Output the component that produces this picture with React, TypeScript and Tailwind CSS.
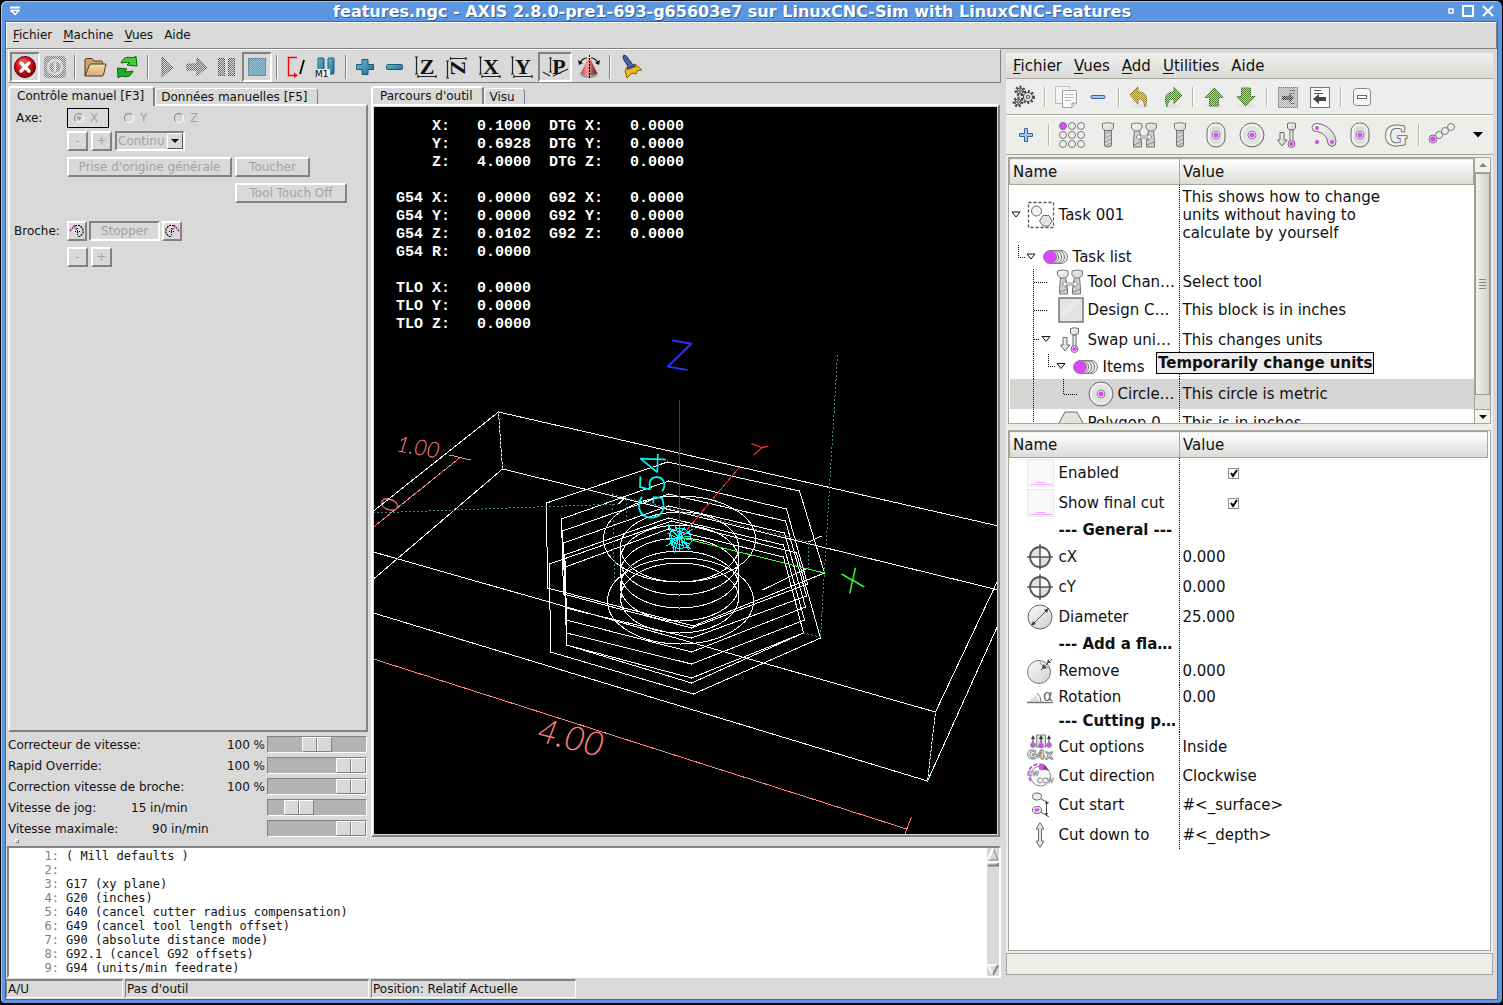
import type { ReactNode } from 'react'
import clsx from 'clsx'

const bevelUp = 'border-2 border-t-white border-l-white border-r-[#828282] border-b-[#828282]'
const bevelDown = 'border-2 border-t-[#828282] border-l-[#828282] border-r-white border-b-white'

interface IconProps {
  w?: number
  h?: number
  children: ReactNode
}

function Icon({ w = 26, h = 26, children }: IconProps) {
  return (
    <svg width={w} height={h} viewBox={`0 0 ${w} ${h}`} className="shrink-0" aria-hidden="true">
      {children}
    </svg>
  )
}

function SharedDefs() {
  return (
    <svg className="absolute size-0" aria-hidden="true">
      <defs>
        <pattern id="stipple" width="2" height="2" patternUnits="userSpaceOnUse">
          <rect width="1" height="1" fill="#d9d9d9" />
          <rect x="1" y="1" width="1" height="1" fill="#d9d9d9" />
        </pattern>
        <pattern id="stippleLight" width="2" height="2" patternUnits="userSpaceOnUse">
          <rect width="1" height="1" fill="#ededeb" />
          <rect x="1" y="1" width="1" height="1" fill="#ededeb" />
        </pattern>
        <linearGradient id="teal" x1="0" y1="0" x2="1" y2="1">
          <stop offset="0" stopColor="#6fb9d3" />
          <stop offset="1" stopColor="#1d6c8e" />
        </linearGradient>
        <linearGradient id="metal" x1="0" y1="0" x2="1" y2="1">
          <stop offset="0" stopColor="#fafafa" />
          <stop offset="1" stopColor="#cfcfcd" />
        </linearGradient>
        <linearGradient id="folder" x1="0" y1="0" x2="0" y2="1">
          <stop offset="0" stopColor="#f7dfb2" />
          <stop offset="1" stopColor="#d9ac6a" />
        </linearGradient>
        <radialGradient id="redBall" cx="0.4" cy="0.3" r="0.7">
          <stop offset="0" stopColor="#f47070" />
          <stop offset="0.5" stopColor="#d01218" />
          <stop offset="1" stopColor="#8c0408" />
        </radialGradient>
        <linearGradient id="cone" x1="0" y1="0" x2="1" y2="0">
          <stop offset="0" stopColor="#c04040" />
          <stop offset="0.4" stopColor="#f5a0a0" />
          <stop offset="1" stopColor="#501010" />
        </linearGradient>
      </defs>
    </svg>
  )
}

/* ---- machine toolbar icons ---- */

const PLAY = 'M8 3 L19 13 L8 23 Z'
const STEP = 'M3 10 H13 V4 L23 13 L13 22 V16 H3 Z'

function Stippled({ children }: { children: ReactNode }) {
  return (
    <Icon>
      {children}
      <rect width="26" height="26" fill="url(#stipple)" />
    </Icon>
  )
}

const EstopIcon = () => (
  <Icon>
    <circle cx="13" cy="13" r="10.5" fill="url(#redBall)" stroke="#5c0306" />
    <path d="M9 9 L17 17 M17 9 L9 17" stroke="#fff" strokeWidth="3.4" strokeLinecap="round" />
  </Icon>
)

const PowerIcon = () => (
  <Stippled>
    <rect x="2" y="2" width="22" height="22" rx="4" fill="#c0664c" />
    <circle cx="13" cy="13" r="7" fill="none" stroke="#e6dcd8" strokeWidth="2.4" />
    <path d="M13 8 V18" stroke="#e6dcd8" strokeWidth="2.4" />
  </Stippled>
)

const FolderIcon = () => (
  <Icon>
    <path d="M3 22 V6 Q3 4.500 4.500 4.500 H10 L12 7 H19 Q20.500 7 20.500 8.500 V11" fill="#c9a36a" stroke="#4d3a1c" />
    <path d="M3 22 L7.500 11 Q8 10 9 10 H24 L21.500 21 Q21 22 20 22 Z" fill="url(#folder)" stroke="#4d3a1c" />
  </Icon>
)

const ReloadIcon = () => (
  <Icon>
    <path d="M7 9 C9 4 13 2 18 4 L22 2.500 L23 12 L13 11 L15.500 8.500 C13 8 10 8.500 7 9 Z" fill="#3cd03c" stroke="#0c5c12" />
    <path d="M19 17 C17 22 13 24 8 22 L4 23.500 L3.500 14 L13 15 L10.500 17.500 C13 18 16 17.500 19 17 Z" fill="#1fae28" stroke="#0c5c12" />
  </Icon>
)

const SkipIcon = () => (
  <Icon>
    <path d="M14 3.500 H5.500 V21.500 H12" fill="none" stroke="#f00" strokeWidth="1.400" />
    <path d="M11 18.500 L15 21.500 L11 24 Z" fill="#f00" />
    <path d="M21 6 L17 20" stroke="#000" strokeWidth="1.800" />
  </Icon>
)

const OptStopIcon = () => (
  <Icon>
    <rect x="5" y="4" width="6" height="16" rx="1" fill="url(#teal)" stroke="#1d5c78" />
    <rect x="15" y="4" width="6" height="16" rx="1" fill="url(#teal)" stroke="#1d5c78" />
    <rect x="3" y="15" width="14" height="8" fill="#eee" />
    <text x="2" y="23" fontFamily="DejaVu Sans" fontSize="9" fill="#000">M1</text>
  </Icon>
)

interface ViewIconProps {
  letter: string
  sideways?: boolean
  perspective?: boolean
}

function ViewIcon({ letter, sideways, perspective }: ViewIconProps) {
  return (
    <Icon w={28}>
      {perspective ? (
        <path d="M9.500 4 V18 M8 4 H11 M8 18 H11 M2 18 L9 22 M12 22 L27 15" fill="none" stroke="#222" strokeWidth="1.200" />
      ) : sideways ? (
        <path d="M6.500 4.500 H22 M6.500 3 V6 M22 3 V6 M3.500 7 V24 M2 7 H5 M2 24 H5" fill="none" stroke="#222" strokeWidth="1.200" />
      ) : (
        <path d="M4.500 3 V20 M3 3 H6 M3 20 H6 M6 22.500 H24 M6 21 V24 M24 21 V24" fill="none" stroke="#222" strokeWidth="1.200" />
      )}
      <text
        x={perspective ? 18 : 15}
        y="20"
        textAnchor="middle"
        transform={sideways ? 'rotate(90 14 13)' : undefined}
        fontFamily="Liberation Serif"
        fontWeight="bold"
        fontSize="22"
        fill="#111"
      >
        {letter}
      </text>
    </Icon>
  )
}

const ConeIcon = () => (
  <Icon>
    <ellipse cx="13" cy="20" rx="9" ry="4" fill="#999" />
    <path d="M12 4 L5 19 Q13 25 21 19 L14 4 Z" fill="url(#cone)" />
    <path d="M13.500 1 V25" stroke="#000" strokeDasharray="2 1" />
    <path d="M4 9 C6 5 8 4 11 4 M22 9 C20 5 18 4 15 4" fill="none" stroke="#111" strokeWidth="1.200" />
    <path d="M2 6 L3 11 L7 9 Z M24 6 L23 11 L19 9 Z" fill="#111" />
  </Icon>
)

const BroomIcon = () => (
  <Icon>
    <path d="M4 2 Q7 0 8 3 L14 11 L10 14 L5 6 Z" fill="#4a62b0" stroke="#1d2a5c" />
    <path d="M8 13 L16 10 L23 16 L18 17 L17 20 L13 19 L8 24 L6 17 Z" fill="#f0b818" stroke="#8a5a08" />
    <path d="M8 13 L16 10 L17 13 L8 16 Z" fill="#3b4f96" />
  </Icon>
)

interface ToolButtonProps {
  label: string
  pressed?: boolean
  width?: string
  children: ReactNode
}

function ToolButton({ label, pressed, width = 'w-[30px]', children }: ToolButtonProps) {
  return (
    <button
      type="button"
      aria-label={label}
      className={clsx('flex h-[30px] items-center justify-center border-2', width, pressed ? bevelDown : 'border-transparent')}
    >
      {children}
    </button>
  )
}

const ToolSep = () => (
  <div className="flex w-[9px] shrink-0 justify-center">
    <div className="h-6 w-[2px] border-r border-l border-r-white border-l-[#828282]" />
  </div>
)

function MachineToolbar() {
  return (
    <div className="ml-[2px] flex h-[34px] items-center border-t border-r border-b border-l border-t-white border-l-white border-r-[#828282] border-b-[#828282] pt-px pl-px">
      <ToolButton label="Arrêt d'urgence" pressed><EstopIcon /></ToolButton>
      <ToolButton label="Marche machine"><PowerIcon /></ToolButton>
      <ToolSep />
      <ToolButton label="Ouvrir" width="w-8"><FolderIcon /></ToolButton>
      <ToolButton label="Recharger" width="w-8"><ReloadIcon /></ToolButton>
      <ToolSep />
      <ToolButton label="Départ cycle"><Stippled><path d={PLAY} fill="#47849c" stroke="#1d4c60" /></Stippled></ToolButton>
      <ToolButton label="Pas à pas"><Stippled><path d={STEP} fill="#47849c" stroke="#1d4c60" /></Stippled></ToolButton>
      <ToolButton label="Pause">
        <Stippled>
          <rect x="4.500" y="4.500" width="6" height="17" fill="#47849c" stroke="#1d4c60" />
          <rect x="14.500" y="4.500" width="6" height="17" fill="#47849c" stroke="#1d4c60" />
        </Stippled>
      </ToolButton>
      <ToolButton label="Stop" pressed>
        <Icon>
          <rect x="4.500" y="4.500" width="17" height="17" fill="#5fa9cc" stroke="#3f7f9d" />
          <rect width="26" height="26" fill="url(#stipple)" fillOpacity="0.4" />
        </Icon>
      </ToolButton>
      <ToolSep />
      <ToolButton label="Sauter les lignes"><SkipIcon /></ToolButton>
      <ToolButton label="Arrêt optionnel"><OptStopIcon /></ToolButton>
      <ToolSep />
      <ToolButton label="Zoom avant">
        <Icon><path d="M10 5.500 H16 V10.500 H21.500 V15.500 H16 V20.500 H10 V15.500 H4.500 V10.500 H10 Z" fill="url(#teal)" stroke="#1d5c78" /></Icon>
      </ToolButton>
      <ToolButton label="Zoom arrière">
        <Icon><rect x="4.500" y="10.500" width="16" height="5" rx="1" fill="url(#teal)" stroke="#1d5c78" /></Icon>
      </ToolButton>
      <ToolButton label="Vue Z" width="w-8"><ViewIcon letter="Z" /></ToolButton>
      <ToolButton label="Vue Z tournée" width="w-8"><ViewIcon letter="Z" sideways /></ToolButton>
      <ToolButton label="Vue X" width="w-8"><ViewIcon letter="X" /></ToolButton>
      <ToolButton label="Vue Y" width="w-8"><ViewIcon letter="Y" /></ToolButton>
      <ToolButton label="Perspective" width="w-[34px]" pressed><ViewIcon letter="P" perspective /></ToolButton>
      <ToolButton label="Rotation" width="w-[33px]"><ConeIcon /></ToolButton>
      <ToolSep />
      <ToolButton label="Effacer le tracé" width="w-9"><BroomIcon /></ToolButton>
    </div>
  )
}

/* ---- left column ---- */

function Tab({ active, children }: { active?: boolean; children: ReactNode }) {
  return (
    <button
      type="button"
      className={clsx(
        'flex items-center rounded-t border-t border-l border-r border-t-white border-l-white border-r-[#828282] whitespace-nowrap',
        active ? 'relative -mb-[2px] h-5 border-t-2 border-r-2 border-l-2 bg-[#d9d9d9] pr-[9px] pb-[3px] pl-[7px]' : 'h-4 pt-px pr-[9px] pl-[5px]',
      )}
    >
      {children}
    </button>
  )
}

function FlatButton({ width, pressed, label, children }: { width: string; pressed?: boolean; label?: string; children: ReactNode }) {
  return (
    <button
      type="button"
      disabled
      aria-label={label}
      className={clsx('flex h-5 items-center justify-center text-[#a3a3a3]', width, pressed ? bevelDown : bevelUp)}
    >
      {children}
    </button>
  )
}

function AxisRadio({ name, checked }: { name: string; checked?: boolean }) {
  return (
    <label className={clsx('flex h-5 w-[42px] items-center gap-[6px] border pl-[6px] text-[#a3a3a3]', checked ? 'border-black' : 'border-transparent')}>
      <input
        type="radio"
        name="axe"
        disabled
        defaultChecked={checked}
        className="size-[10px] appearance-none rounded-full border border-t-[#828282] border-r-white border-b-white border-l-[#828282] checked:bg-[#a3a3a3] checked:bg-clip-content checked:p-[2px]"
      />
      {name}
    </label>
  )
}

function SpindleIcon({ flip }: { flip?: boolean }) {
  return (
    <Icon w={16} h={16}>
      <g transform={flip ? 'matrix(-1 0 0 1 16 0)' : undefined}>
        <path d="M6 2.500 H11 L14 6 V10 L11 13.500 H8" fill="none" stroke="#000" strokeWidth="1.200" strokeDasharray="2 1" />
        <path d="M1 8 L5 3 L8 7" fill="none" stroke="#901090" strokeWidth="1.400" strokeDasharray="2 1" />
        <path d="M8.500 5 V12 M6 8.500 H11" stroke="#000" strokeDasharray="1 1" />
      </g>
    </Icon>
  )
}

function PaneRow({ label, children }: { label?: string; children: ReactNode }) {
  return (
    <div className="flex h-5 items-center">
      <div className="w-[57px] shrink-0 pl-[6px]">{label}</div>
      <div className="flex gap-[3px]">{children}</div>
    </div>
  )
}

function ManualPane() {
  return (
    <div className={clsx('flex flex-1 flex-col pt-[2px]', bevelUp)}>
      <PaneRow label="Axe:">
        <div className="flex gap-2">
          <AxisRadio name="X" checked />
          <AxisRadio name="Y" />
          <AxisRadio name="Z" />
        </div>
      </PaneRow>
      <div className="mt-[3px]">
        <PaneRow>
          <FlatButton width="w-[21px]">-</FlatButton>
          <FlatButton width="w-[21px]">+</FlatButton>
          <div className={clsx('relative flex h-5 w-[70px]', bevelDown)}>
            <select disabled aria-label="Incrément" className="w-full appearance-none bg-transparent pl-px text-[#a3a3a3] opacity-100">
              <option>Continu</option>
            </select>
            <span className="pointer-events-none absolute top-0 right-0 flex h-4 w-4 items-center justify-center border border-t-white border-r-[#555] border-b-[#555] border-l-white bg-[#d9d9d9]">
              <Icon w={8} h={6}><path d="M0 1 H8 L4 5 Z" fill="#111" /></Icon>
            </span>
          </div>
        </PaneRow>
      </div>
      <div className="mt-[6px]">
        <PaneRow>
          <FlatButton width="w-[165px]">Prise d'origine générale</FlatButton>
          <FlatButton width="w-[75px]">Toucher</FlatButton>
        </PaneRow>
      </div>
      <div className="mt-[6px] pl-[168px]">
        <PaneRow>
          <FlatButton width="w-28">Tool Touch Off</FlatButton>
        </PaneRow>
      </div>
      <div className="mt-[18px]">
        <div className="flex h-5 items-center">
          <div className="w-[57px] shrink-0 pl-1">Broche:</div>
          <div className="flex gap-[2px]">
            <FlatButton width="w-5" label="Broche antihoraire"><SpindleIcon /></FlatButton>
            <FlatButton width="w-[71px]" pressed>Stopper</FlatButton>
            <FlatButton width="w-5" label="Broche horaire"><SpindleIcon flip /></FlatButton>
          </div>
        </div>
      </div>
      <div className="mt-[6px]">
        <PaneRow>
          <FlatButton width="w-[21px]">-</FlatButton>
          <FlatButton width="w-[21px]">+</FlatButton>
        </PaneRow>
      </div>
    </div>
  )
}

const overrides = [
  { id: 'feed', label: 'Correcteur de vitesse:', labelWidth: 'flex-1', value: '100 %', pos: 50 },
  { id: 'rapid', label: 'Rapid Override:', labelWidth: 'flex-1', value: '100 %', pos: 100 },
  { id: 'spindle', label: 'Correction vitesse de broche:', labelWidth: 'flex-1', value: '100 %', pos: 100 },
  { id: 'jog', label: 'Vitesse de jog:', labelWidth: 'w-[123px]', value: '15 in/min', pos: 24 },
  { id: 'max', label: 'Vitesse maximale:', labelWidth: 'w-36', value: '90 in/min', pos: 100 },
]

function Overrides() {
  return (
    <div className="mt-[2px] flex flex-col pr-px">
      {overrides.map((o) => (
        <div key={o.id} className="flex h-[21px] items-center">
          <label htmlFor={o.id} className={o.labelWidth}>{o.label}</label>
          <span className="pr-[2px]">{o.value}</span>
          <input
            id={o.id}
            type="range"
            min={0}
            max={100}
            defaultValue={o.pos}
            className="ml-auto h-[17px] w-[100px] appearance-none border border-t-[#828282] border-r-white border-b-white border-l-[#828282] bg-[#b3b3b3] [&::-webkit-slider-thumb]:h-[15px] [&::-webkit-slider-thumb]:w-[30px] [&::-webkit-slider-thumb]:appearance-none [&::-webkit-slider-thumb]:border [&::-webkit-slider-thumb]:border-t-white [&::-webkit-slider-thumb]:border-r-[#828282] [&::-webkit-slider-thumb]:border-b-[#828282] [&::-webkit-slider-thumb]:border-l-white [&::-webkit-slider-thumb]:bg-[linear-gradient(90deg,#d9d9d9_13px,#828282_13px,#828282_14px,#fff_14px,#fff_15px,#d9d9d9_15px)]"
          />
        </div>
      ))}
    </div>
  )
}

/* ---- preview ---- */

const dro = [
  '    X:   0.1000  DTG X:   0.0000',
  '    Y:   0.6928  DTG Y:   0.0000',
  '    Z:   4.0000  DTG Z:   0.0000',
  '',
  'G54 X:   0.0000  G92 X:   0.0000',
  'G54 Y:   0.0000  G92 Y:   0.0000',
  'G54 Z:   0.0102  G92 Z:   0.0000',
  'G54 R:   0.0000',
  '',
  'TLO X:   0.0000',
  'TLO Y:   0.0000',
  'TLO Z:   0.0000',
]

const hexagons = [
  '546,502 667,461 799,490 824,572 693,625 547,587',
  '549,563 671,520 796,552 820,637 693,693 550,651',
  '561,518 668,480 786,508 807,583 691,627 563,593',
  '562,530 668,493 785,520 806,595 691,637 565,607',
  '563,542 668,505 784,532 805,606 691,651 566,619',
  '564,554 668,517 783,544 804,619 691,663 566,632',
  '565,566 668,528 783,556 803,632 691,677 566,644',
]

const boreLevels = [546, 559, 572, 585, 597]

function Preview() {
  return (
    <div className={clsx('relative flex flex-1 flex-col p-px', bevelUp)}>
      <svg
        viewBox="373 106 624 727"
        preserveAspectRatio="xMidYMid slice"
        shapeRendering="crispEdges"
        className="min-h-0 w-full flex-1 bg-black"
        role="img"
        aria-label="Parcours d'outil"
      >
        <g fill="none" stroke="#fff">
          <path d="M373 510 L498 411 L998 525 M498 411 L502 468 M373 578 L502 468 L998 589" />
          <path d="M373 551 L935 711 L998 578 M373 612 L927 780 L998 623 M935 711 L927 780" />
          {hexagons.map((points) => (
            <polygon key={points} points={points} />
          ))}
          <path d="M566 644 L691 682 L803 632 M561 518 L563 593 M565 560 V624 M564 556 L566 610 M762 589 L807 567 M808 541 L821 535 M618 503 L625 496" />
          <ellipse cx="679" cy="538" rx="76" ry="43" />
          <ellipse cx="680" cy="600" rx="73" ry="43" />
          {boreLevels.map((cy) => (
            <ellipse key={cy} cx="679" cy={cy} rx="59" ry="35" />
          ))}
          <path d="M620 546 L621 597 M738 546 V597" />
        </g>
        <g fill="none" stroke="#4d8080" strokeDasharray="2 2">
          <path d="M837 354 L820 636 M373 512 L618 503 M614 581 L612 493 L626 497 V522 M626 497 L808 541 V568 M803 632 L820 636" />
          <path d="M498 411 L502 468 M935 711 L927 780" />
        </g>
        <g fill="none" stroke="#ff8080">
          <path d="M373 658 L906 828 M911 816 L904 834 M373 526 L459 457 M449 454 L470 459" />
        </g>
        <path d="M679 399 V535" stroke="#33f" fill="none" />
        <path d="M682 537 L824 572" stroke="#3f3" fill="none" />
        <path d="M683 533 L739 466" stroke="#f33" fill="none" />
        <path
          d="M668 526 L690 548 M666 545 L692 528 M679 523 V550 M663 539 L691 535 M670 531 L676 527 L684 528 L690 533 L691 540 L687 546 L678 548 L671 544 L669 537 Z M668 523 L674 552 L680 530 L688 549 M672 547 L684 526 M667 532 L688 543 M674 524 L683 545 L670 540 L689 531"
          stroke="#0ff"
          fill="none"
        />
        <g fontFamily="Lato" fontWeight="300">
          <g fill="#ff8080" fontStyle="italic">
            <text transform="translate(535 740) rotate(14)" fontSize="34">4.00</text>
            <text transform="translate(395 450) rotate(10)" fontSize="22">1.00</text>
            <text transform="translate(396 512) rotate(-80)" fontSize="24">0</text>
          </g>
          <text transform="translate(665 366) rotate(10)" fontSize="40" fill="#33f">Z</text>
          <text transform="translate(769 452) rotate(-101)" fontSize="23" fill="#f33">Y</text>
          <text transform="translate(848 593) rotate(-24)" fontSize="30" fill="#3f3">X</text>
          <text transform="translate(663 520) rotate(-88)" fontSize="36" fill="#0ff">G54</text>
        </g>
      </svg>
      <pre className="absolute top-[12px] left-[23px] font-['Liberation_Mono'] text-[15px] leading-[18px] font-bold text-white">
        {dro.join('\n')}
      </pre>
    </div>
  )
}

/* ---- program listing ---- */

const program = [
  '( Mill defaults )',
  '',
  'G17 (xy plane)',
  'G20 (inches)',
  'G40 (cancel cutter radius compensation)',
  'G49 (cancel tool length offset)',
  'G90 (absolute distance mode)',
  'G92.1 (cancel G92 offsets)',
  'G94 (units/min feedrate)',
]

function Listing() {
  return (
    <div className={clsx('ml-px flex h-[132px] bg-white', bevelDown)}>
      <ol className="flex-1 pt-px font-['DejaVu_Sans_Mono'] text-[12px] leading-[14px]">
        {program.map((line, i) => (
          <li key={i} className="flex h-[14px] whitespace-pre">
            <span className="w-[50px] text-right text-[#808080]">{i + 1}:</span>
            <span className="pl-[7px]">{line}</span>
          </li>
        ))}
      </ol>
      <div className="flex w-3 flex-col items-center justify-between bg-[#d9d9d9]">
        <Icon w={12} h={20}>
          <path d="M6 0 L11 12 H1 Z" fill="#d9d9d9" stroke="#828282" />
          <path d="M6 0 L1 12" stroke="#fff" strokeWidth="2" />
          <path d="M0 14 H12" stroke="#fff" strokeWidth="2" />
          <path d="M1 17.500 H11 V15" fill="none" stroke="#828282" strokeWidth="2" />
        </Icon>
        <Icon w={12} h={12}>
          <path d="M1 1 H11 L6 11 Z" fill="#d9d9d9" stroke="#fff" strokeWidth="1.500" />
          <path d="M11 1 L6 11" stroke="#828282" strokeWidth="2" />
        </Icon>
      </div>
    </div>
  )
}

/* ---- features panel icons ---- */

const G = '#6b6b69'
const PINK = '#dd44ff'

const BoltIcon = () => (
  <Icon>
    <g stroke="#777">
      <path d="M9.500 8 H16.500 V24 Q13 26 9.500 24 Z" fill="#cfcfcd" />
      <path d="M10 12 L16 9 M10 16 L16 13 M10 20 L16 17 M10 24 L16 21" stroke="#999" />
      <path d="M7.500 1.500 Q13 0 18.500 1.500 V6 L16 8.500 H10 L7.500 6 Z" fill="url(#metal)" />
    </g>
  </Icon>
)

const ToolChangeIcon = () => (
  <Icon w={28}>
    <g stroke="#777">
      <path d="M4.500 8 H9.500 L11.500 20 V25 H3.500 V20 Z M18.500 8 H23.500 L24.500 20 V25 H16.500 V20 Z" fill="#cfcfcd" />
      <path d="M4 23 L11 20 M17 23 L24 20" stroke="#888" />
      <path d="M1.500 2 Q6.500 0 12 2 V6 L9.500 9 H4.500 L1.500 6 Z M16 2 Q21 0 26.500 2 V6 L23.500 9 H18.500 L16 6 Z" fill="url(#metal)" />
      <path d="M6 15 L10 11.500 V14 H18 V11.500 L22 15 L18 18.500 V16 H10 V18.500 Z" fill="#f4f4f3" strokeWidth="0.800" />
    </g>
  </Icon>
)

const GridIcon = () => (
  <Icon w={28} h={28}>
    {[5, 14, 23].map((y) =>
      [5, 14, 23].map((x) => (
        <circle key={`${x}-${y}`} cx={x} cy={y} r="3.500" fill={x === 5 && y === 5 ? PINK : '#efefef'} stroke="#777" />
      )),
    )}
  </Icon>
)

const SlotIcon = () => (
  <Icon>
    <rect x="4" y="1" width="18" height="24" rx="8.500" fill="url(#metal)" stroke={G} />
    <rect x="6" y="3" width="14" height="20" rx="6.500" fill="#dcdcda" stroke="#fff" />
    <circle cx="13" cy="13" r="4" fill="#eee" stroke="#888" />
    <circle cx="13" cy="13" r="2.500" fill={PINK} />
  </Icon>
)

const CircleIcon = () => (
  <Icon>
    <circle cx="13" cy="13" r="12" fill="url(#metal)" stroke={G} />
    <circle cx="13" cy="13" r="10" fill="#e2e2e0" stroke="#f8f8f8" />
    <circle cx="13" cy="13" r="4" fill="#eee" stroke="#888" />
    <circle cx="13" cy="13" r="2.500" fill={PINK} />
  </Icon>
)

const SwapIcon = () => (
  <Icon>
    <path d="M5 10.500 H9 V18 H12 L7 24 L2.500 18 H5 Z" fill="url(#metal)" stroke={G} />
    <path d="M12.500 1.500 Q16.500 0 20.500 1.500 V6 L18.500 8 H14.500 L12.500 6 Z" fill="url(#metal)" stroke={G} />
    <rect x="15" y="8" width="3" height="12" fill="#eee" stroke={G} />
    <circle cx="16.500" cy="22" r="3.500" fill="#eee" stroke={G} />
    <circle cx="16.500" cy="22" r="2.300" fill={PINK} />
  </Icon>
)

const ArcIcon = () => (
  <Icon>
    <path d="M5 1.500 C16 1.500 25 11 25 20 Q25 24 21 24.500 Q17 24 16.500 20 C16 14 11 10 5 9.500 Q1 9 1 5.500 Q1 2 5 1.500 Z" fill="url(#metal)" stroke={G} />
    <circle cx="6" cy="6" r="2" fill={PINK} />
    <circle cx="21" cy="20" r="2" fill={PINK} />
    <circle cx="6" cy="20" r="2" fill={PINK} stroke="#999" strokeWidth="0.500" />
  </Icon>
)

const GcodeIcon = () => (
  <Icon w={32} h={32}>
    <text x="16" y="26" textAnchor="middle" fontFamily="Liberation Serif" fontSize="30" fill="#efefed" stroke="#6b6b69" strokeWidth="3">
      G
    </text>
    <text x="16" y="26" textAnchor="middle" fontFamily="Liberation Serif" fontSize="30" fill="#f4f4f3" stroke="#f4f4f3">
      G
    </text>
  </Icon>
)

const ChainIcon = () => (
  <Icon w={30}>
    <circle cx="24" cy="5" r="3.500" fill="#efefef" stroke="#777" />
    <circle cx="18" cy="9" r="3.500" fill="#efefef" stroke="#777" />
    <circle cx="12" cy="13" r="3.500" fill="#efefef" stroke="#777" />
    <circle cx="6" cy="17" r="4" fill="#efefef" stroke="#777" />
    <circle cx="6" cy="17" r="2.700" fill={PINK} />
  </Icon>
)

const Gear = ({ x, y, r }: { x: number; y: number; r: number }) => (
  <g>
    <circle cx={x} cy={y} r={r} fill="none" stroke="#444" strokeWidth="2.800" strokeDasharray="1.800 1.800" />
    <circle cx={x} cy={y} r={r - 1} fill="#efefed" stroke="#444" />
    <circle cx={x} cy={y} r={r / 3} fill="#ccc" stroke="#555" />
  </g>
)

const GearsIcon = () => (
  <Icon w={24} h={24}>
    <Gear x={8} y={6} r={4} />
    <Gear x={6} y={17} r={4} />
    <Gear x={16} y={12} r={5.5} />
  </Icon>
)

const CopyIcon = () => (
  <Icon w={24} h={24}>
    <rect x="1.500" y="1.500" width="14" height="17" fill="#f4f4f4" stroke="#c0c0be" />
    <path d="M8.500 5.500 H22.500 V18 L18 22.500 H8.500 Z" fill="#f8f8f8" stroke="#a0a09e" />
    <path d="M11 9.500 H20 M11 12.500 H20 M11 15.500 H17" stroke="#b8b8b6" />
    <path d="M22.500 18 H18 V22.500" fill="#ddd" stroke="#a0a09e" />
  </Icon>
)

function Faded({ children }: { children: ReactNode }) {
  return (
    <Icon w={24} h={24}>
      <ellipse cx="12" cy="21" rx="9" ry="2" fill="#dcdcda" />
      {children}
      <rect width="24" height="24" fill="url(#stippleLight)" fillOpacity="0.7" />
    </Icon>
  )
}

const UNDO = 'M10 2 V7 C17 7 21 11 17 22 C16 16 14 14 10 14 V19 L2 10 Z'

const IndentIcon = ({ back }: { back?: boolean }) => (
  <Icon w={24} h={24}>
    <rect x="2.500" y="2.500" width="19" height="20" fill={back ? '#fafafa' : '#b4b4b2'} stroke="#777" />
    <path d={back ? 'M6 5.500 H13 M6 8.500 H15' : 'M14 5.500 H19 M14 8.500 H19 M14 18.500 H19'} stroke="#555" />
    <path d={back ? 'M5 14 L11 9 V12 H18 V16 H11 V19 Z' : 'M18 13 L13 8 V11 H6 V15 H13 V18 Z'} fill="#444" />
    {!back && <rect width="24" height="24" fill="url(#stippleLight)" fillOpacity="0.6" />}
  </Icon>
)

function PanelButton({ label, wide, children }: { label: string; wide?: boolean; children: ReactNode }) {
  return (
    <button type="button" aria-label={label} className={clsx('flex shrink-0 items-center justify-center', wide ? 'w-9' : 'w-8')}>
      {children}
    </button>
  )
}

const PanelSep = ({ tall }: { tall?: boolean }) => (
  <div className="flex w-[10px] shrink-0 items-center pl-1">
    <div className={clsx('w-[2px] border-r border-l border-r-white border-l-[#b5b5ab]', tall ? 'h-[22px]' : 'h-5')} />
  </div>
)

function FeatureToolbars() {
  return (
    <>
      <div className="flex h-9 border-b border-[#a5a59b] pl-[2px] shadow-[0_1px_0_#fff]">
        <PanelButton label="Générer"><GearsIcon /></PanelButton>
        <PanelSep />
        <PanelButton label="Dupliquer"><CopyIcon /></PanelButton>
        <PanelButton label="Supprimer">
          <Icon w={24} h={24}><rect x="5" y="10.500" width="14" height="3" rx="1" fill="#a9c4e8" stroke="#3465a4" /></Icon>
        </PanelButton>
        <PanelSep />
        <PanelButton label="Annuler"><Faded><path d={UNDO} fill="#a58f28" stroke="#6c5a10" /></Faded></PanelButton>
        <PanelButton label="Rétablir">
          <Faded><g transform="matrix(-1 0 0 1 24 0)"><path d={UNDO} fill="#4f8630" stroke="#2d4f14" /></g></Faded>
        </PanelButton>
        <PanelSep />
        <PanelButton label="Monter"><Faded><path d="M12 3 L21 12.500 H16.500 V21 H7.500 V12.500 H3 Z" fill="#4f8630" stroke="#2d4f14" /></Faded></PanelButton>
        <PanelButton label="Descendre"><Faded><path d="M12 21 L21 11.500 H16.500 V3 H7.500 V11.500 H3 Z" fill="#4f8630" stroke="#2d4f14" /></Faded></PanelButton>
        <PanelSep />
        <PanelButton label="Indenter"><IndentIcon /></PanelButton>
        <PanelButton label="Désindenter"><IndentIcon back /></PanelButton>
        <PanelSep />
        <PanelButton label="Replier">
          <Icon w={24} h={24}>
            <rect x="3.500" y="3.500" width="17" height="17" rx="3" fill="#f6f6f5" stroke="#888" />
            <rect x="7.500" y="10.500" width="9" height="3" fill="#fff" stroke="#666" />
          </Icon>
        </PanelButton>
      </div>
      <div className="flex h-10 border-b border-[#a5a59b] pl-[2px]">
        <PanelButton label="Ajouter" wide>
          <Icon><path d="M11.500 6.500 H14.500 V11.500 H19.500 V14.500 H14.500 V19.500 H11.500 V14.500 H6.500 V11.500 H11.500 Z" fill="#a9c4e8" stroke="#3465a4" /></Icon>
        </PanelButton>
        <PanelSep tall />
        <PanelButton label="Matrice" wide><GridIcon /></PanelButton>
        <PanelButton label="Outil" wide><BoltIcon /></PanelButton>
        <PanelButton label="Changement d'outil" wide><ToolChangeIcon /></PanelButton>
        <PanelButton label="Perçage" wide><BoltIcon /></PanelButton>
        <PanelButton label="Rainure" wide><SlotIcon /></PanelButton>
        <PanelButton label="Cercle" wide><CircleIcon /></PanelButton>
        <PanelButton label="Unités" wide><SwapIcon /></PanelButton>
        <PanelButton label="Arc" wide><ArcIcon /></PanelButton>
        <PanelButton label="Poche" wide><SlotIcon /></PanelButton>
        <PanelButton label="G-code" wide><GcodeIcon /></PanelButton>
        <PanelSep tall />
        <PanelButton label="Chaîne" wide><ChainIcon /></PanelButton>
        <button type="button" aria-label="Plus" className="ml-auto flex w-[30px] items-center justify-center">
          <Icon w={10} h={6}><path d="M0 0 H10 L5 5.500 Z" fill="#000" /></Icon>
        </button>
      </div>
    </>
  )
}

/* ---- tree rows ---- */

const TaskIcon = () => (
  <Icon w={28} h={28}>
    <rect x="1.500" y="1.500" width="25" height="25" fill="none" stroke="#555" strokeWidth="1.300" strokeDasharray="3 2" />
    <circle cx="9.500" cy="10" r="5" fill="#f1f1f0" stroke={G} />
    <path d="M12.500 20 L16 14.500 H22 L25 20 L22 25 H16 Z" fill="#e4e4e2" stroke={G} />
  </Icon>
)

const ListIcon = () => (
  <Icon w={27} h={16}>
    {[19, 16, 13, 10].map((cx) => (
      <circle key={cx} cx={cx} cy="8" r="6.500" fill="#efefef" stroke="#777" />
    ))}
    <circle cx="8" cy="8" r="6.500" fill={PINK} stroke="#888" />
  </Icon>
)

const DesignIcon = () => (
  <Icon>
    <rect x="1" y="1" width="24" height="24" fill="#e3e3e1" stroke="#777" strokeWidth="1.500" />
    <path d="M3 16 L16 3 H23 L3 22 Z" fill="#ebebea" />
  </Icon>
)

const PolygonIcon = () => (
  <Icon>
    <path d="M1 13 L7 2 H19 L25 13 L19 24 H7 Z" fill="#e3e3e1" stroke={G} />
  </Icon>
)

const treeRows = [
  { name: 'Task 001', value: 'This shows how to change units without having to calculate by yourself', h: 60, indent: 17, lines: '', arrow: 6, icon: <TaskIcon /> },
  { name: 'Task list', value: '', h: 24, indent: 32, lines: 'M8.5 0 V12.500 H15', arrow: 21, icon: <ListIcon /> },
  { name: 'Tool Chan…', value: 'Select tool', h: 26, indent: 46, lines: 'M23.500 0 V27 M24 13.500 H38', icon: <ToolChangeIcon /> },
  { name: 'Design C…', value: 'This block is in inches', h: 30, indent: 48, lines: 'M23.500 0 V30 M24 15.500 H38', icon: <DesignIcon /> },
  { name: 'Swap uni…', value: 'This changes units', h: 29, indent: 48, lines: 'M23.500 0 V29 M24 14.500 H30', arrow: 36, icon: <SwapIcon /> },
  { name: 'Items', value: '', h: 25, indent: 62, lines: 'M23.500 0 V25 M38.500 0 V12.500 H45', arrow: 51, icon: <ListIcon /> },
  { name: 'Circle…', value: 'This circle is metric', h: 30, indent: 78, lines: 'M23.500 0 V30 M53.500 0 V15.500 H68', icon: <CircleIcon />, selected: true },
  { name: 'Polygon 0', value: 'This is in inches', h: 28, indent: 48, lines: 'M23.500 0 V28', icon: <PolygonIcon /> },
]

function HeaderRow() {
  return (
    <thead>
      <tr className="h-[26px] text-left">
        <th className="w-[170px] border border-[#a5a59b] bg-linear-to-b from-white to-[#dadad6] p-0 pl-[3px] font-normal">Name</th>
        <th className="border border-[#a5a59b] bg-linear-to-b from-white to-[#dadad6] p-0 pl-[3px] font-normal">Value</th>
      </tr>
    </thead>
  )
}

const dottedEdge = 'bg-[repeating-linear-gradient(#000_0_1px,transparent_1px_2px)] bg-[length:1px_100%] bg-right bg-no-repeat'

function FeatureTree() {
  return (
    <div className="relative m-[2px] mb-[6px] flex h-[267px] border border-[#a5a59b]">
      <div className="flex-1 overflow-hidden bg-white">
        <table className="w-full table-fixed border-collapse">
          <HeaderRow />
          <tbody>
            {treeRows.map((row) => (
              <tr key={row.name} style={{ height: row.h }} className={clsx(row.selected && 'bg-[#d6d5d3]')}>
                <td className={clsx('p-0', dottedEdge)}>
                  <div className="flex items-center overflow-hidden whitespace-nowrap" style={{ height: row.h }}>
                    <svg width={row.indent} height={row.h} className="shrink-0" aria-hidden="true">
                      <path d={row.lines} fill="none" stroke="#000" strokeDasharray="1 1" shapeRendering="crispEdges" />
                      {row.arrow && (
                        <path
                          d={`M${row.arrow - 4} ${row.h / 2 - 3} h8 l-4 5 Z`}
                          fill="#fff"
                          stroke="#111"
                        />
                      )}
                    </svg>
                    {row.icon}
                    <span className="pl-1">{row.name}</span>
                  </div>
                </td>
                <td className="py-0 pr-[80px] pl-[3px] leading-[18px]">{row.value}</td>
              </tr>
            ))}
          </tbody>
        </table>
      </div>
      <div className="flex w-4 flex-col border-l border-[#a5a59b] bg-[#ddddd9]">
        <button type="button" aria-label="Défiler vers le haut" className="flex h-[15px] items-center justify-center border-b border-[#a5a59b] bg-[#f2f2f0]">
          <Icon w={8} h={4}><path d="M0 4 H8 L4 0 Z" fill="#888" /></Icon>
        </button>
        <div className="flex h-[222px] flex-col items-center justify-center gap-[2px] border border-[#999990] bg-linear-to-r from-[#f2f2f0] to-[#cfcfcb]">
          {[0, 1, 2, 3].map((i) => (
            <div key={i} className="h-px w-[7px] bg-[#888]" />
          ))}
        </div>
        <button type="button" aria-label="Défiler vers le bas" className="mt-auto flex h-[14px] items-center justify-center border-t border-[#a5a59b] bg-[#f2f2f0]">
          <Icon w={8} h={4}><path d="M0 0 H8 L4 4 Z" fill="#111" /></Icon>
        </button>
      </div>
      <div role="tooltip" className="absolute top-[194px] left-[147px] border border-black bg-[#ededed] px-px leading-5 font-bold whitespace-nowrap">
        Temporarily change units
      </div>
    </div>
  )
}

/* ---- property rows ---- */

const NoImageIcon = () => (
  <Icon w={27} h={28}>
    <rect x="0.500" y="0.500" width="26" height="27" fill="#f8f8f8" stroke="#e8e8e8" />
    <path d="M9 23.500 H18" stroke="#f0a8ff" />
    <path d="M3 25.500 H25" stroke="#f0a8ff" />
  </Icon>
)

const CenterIcon = () => (
  <Icon w={27}>
    <circle cx="13" cy="13" r="10" fill="#fff" />
    <path d="M13 13 H23 A10 10 0 0 1 13 23 Z M13 13 H3 A10 10 0 0 1 13 3 Z" fill="#e2e2e0" />
    <circle cx="13" cy="13" r="10" fill="none" stroke="#555" strokeWidth="1.800" />
    <path d="M13 0 V26 M0 13 H26" stroke="#555" strokeWidth="1.500" />
  </Icon>
)

const DiameterIcon = () => (
  <Icon w={27}>
    <circle cx="13" cy="13" r="12" fill="url(#metal)" stroke="#666" />
    <path d="M5 21 L21 5" stroke="#555" />
    <path d="M4 22 L6 17 L9 20 Z M22 4 L20 9 L17 6 Z" fill="#444" />
  </Icon>
)

const RemoveIcon = () => (
  <Icon w={27}>
    <circle cx="12" cy="14" r="11.500" fill="url(#metal)" stroke="#777" />
    <path d="M13 4 Q16 11 22 9" fill="none" stroke="#999" />
    <path d="M14 12 L25 1" stroke="#555" />
    <path d="M15 11 L16 6 L20 10 Z M20 5 L21 1 L24 5 Z" fill="#444" />
  </Icon>
)

const RotationIcon = () => (
  <Icon w={27} h={14}>
    <path d="M1 12 L9 5 L13 12 Z" fill="#ddd" />
    <path d="M0 12.500 H26" stroke="#777" strokeWidth="1.500" />
    <path d="M10 3 Q14 6 14 12" fill="none" stroke="#777" />
    <text x="16" y="11" fontFamily="DejaVu Sans" fontSize="15" fill="#666">α</text>
  </Icon>
)

const CutOptionsIcon = () => (
  <Icon w={28}>
    <rect x="9.500" y="1" width="9" height="12" fill="#ddd" stroke="#888" />
    <path d="M6 3 V10 M14 3 V10 M22 3 V10" stroke="#333" />
    <path d="M4 5 L6 1 L8 5 Z M12 5 L14 1 L16 5 Z M20 5 L22 1 L24 5 Z" fill="#333" />
    <circle cx="6" cy="11" r="2.500" fill={PINK} stroke="#999" />
    <circle cx="14" cy="11.500" r="2.500" fill={PINK} stroke="#999" />
    <circle cx="22" cy="11" r="2.500" fill={PINK} stroke="#999" />
    <text x="0" y="25" fontFamily="DejaVu Sans" fontWeight="bold" fontSize="12" fill="#eee" stroke="#777" strokeWidth="0.800">G4x</text>
  </Icon>
)

const CutDirectionIcon = () => (
  <Icon w={28}>
    <circle cx="13.500" cy="13" r="10" fill="#f8f8f8" stroke="#888" />
    <path d="M4 18 A10 10 0 0 1 19 4.500" fill="none" stroke={PINK} strokeWidth="2" strokeDasharray="4 2" />
    <circle cx="15" cy="4" r="3" fill={PINK} stroke="#888" />
    <path d="M18 2 L22 8 L16 6 Z" fill="#555" />
    <text x="0" y="13" fontFamily="DejaVu Sans" fontSize="7" fill="#eee" stroke="#999" strokeWidth="0.600">CW</text>
    <text x="10" y="20" fontFamily="DejaVu Sans" fontSize="7" fill="#eee" stroke="#999" strokeWidth="0.600">CCW</text>
  </Icon>
)

const CutStartIcon = () => (
  <Icon w={27}>
    <ellipse cx="10" cy="4.500" rx="4.500" ry="3.500" fill="#eee" stroke={G} />
    <ellipse cx="10" cy="18" rx="4.500" ry="3.500" fill="#eee" stroke={G} />
    <ellipse cx="10" cy="18" rx="2.500" ry="1.800" fill={PINK} />
    <path d="M14 7 L22 11 M14 20 L22 25 M19.500 10 V23" stroke="#555" />
    <path d="M18 12 L19.500 9 L21 12 Z M18 21 L19.500 24 L21 21 Z" fill="#333" />
  </Icon>
)

const CutDepthIcon = () => (
  <Icon w={27}>
    <path d="M13 0.500 L17 7 H14.500 V19 H17 L13 25.500 L9 19 H11.500 V7 H9 Z" fill="#e6e6e4" stroke={G} />
  </Icon>
)

const props = [
  { name: 'Enabled', h: 30, icon: <NoImageIcon />, checkbox: 'enabled' },
  { name: 'Show final cut', h: 30, icon: <NoImageIcon />, checkbox: 'final-cut' },
  { name: '--- General ---', h: 24, header: true },
  { name: 'cX', h: 30, icon: <CenterIcon />, value: '0.000' },
  { name: 'cY', h: 30, icon: <CenterIcon />, value: '0.000' },
  { name: 'Diameter', h: 30, icon: <DiameterIcon />, value: '25.000' },
  { name: '--- Add a fla…', h: 24, header: true },
  { name: 'Remove', h: 29, icon: <RemoveIcon />, value: '0.000' },
  { name: 'Rotation', h: 24, icon: <RotationIcon />, value: '0.00' },
  { name: '--- Cutting p…', h: 23, header: true },
  { name: 'Cut options', h: 30, icon: <CutOptionsIcon />, value: 'Inside' },
  { name: 'Cut direction', h: 28, icon: <CutDirectionIcon />, value: 'Clockwise' },
  { name: 'Cut start', h: 30, icon: <CutStartIcon />, value: '#<_surface>' },
  { name: 'Cut down to', h: 30, icon: <CutDepthIcon />, value: '#<_depth>' },
]

function PropertyTable() {
  return (
    <div className="mx-[2px] flex-1 border border-[#a5a59b] bg-white pr-[2px]">
      <table className="w-full table-fixed border-collapse">
        <HeaderRow />
        <tbody>
          {props.map((p) => (
            <tr key={p.name} style={{ height: p.h }}>
              <td className={clsx('p-0', dottedEdge)}>
                <div className="flex items-center pl-[17px] whitespace-nowrap" style={{ height: p.h }}>
                  <span className="flex w-7 shrink-0">{p.icon}</span>
                  {p.checkbox ? (
                    <label htmlFor={p.checkbox} className="pl-1">{p.name}</label>
                  ) : (
                    <span className={clsx('pl-1', p.header && 'font-bold')}>{p.name}</span>
                  )}
                </div>
              </td>
              <td className="py-0 pl-[3px]">
                {p.checkbox ? (
                  <div className="relative ml-[45px] size-[11px]">
                    <input id={p.checkbox} type="checkbox" defaultChecked className="peer block size-[11px] appearance-none border border-[#8f8f88] bg-white" />
                    <svg width="11" height="11" className="pointer-events-none absolute inset-0 hidden peer-checked:block" aria-hidden="true">
                      <path d="M3 5 L5 8 L9 2" fill="none" stroke="#000" strokeWidth="2" />
                    </svg>
                  </div>
                ) : (
                  p.value
                )}
              </td>
            </tr>
          ))}
        </tbody>
      </table>
    </div>
  )
}

/* ---- menus and window ---- */

function Menu({ items, gap }: { items: string[]; gap: string }) {
  return (
    <nav className={clsx('flex items-center', gap)}>
      {items.map((item) => (
        <button key={item} type="button">
          {item === 'Aide' ? item : (
            <>
              <span className="underline underline-offset-2">{item[0]}</span>
              {item.slice(1)}
            </>
          )}
        </button>
      ))}
    </nav>
  )
}

function FeaturesPanel() {
  return (
    <section className="mt-1 mr-1 mb-6 ml-[5px] flex w-[487px] shrink-0 flex-col bg-[#ededeb] text-[15px] leading-[18px]">
      <div className="flex h-[26px] border-b border-[#a5a59b] bg-linear-to-b from-[#efefed] to-[#dadad6] pl-[7px]">
        <Menu items={['Fichier', 'Vues', 'Add', 'Utilities', 'Aide']} gap="gap-3" />
      </div>
      <FeatureToolbars />
      <FeatureTree />
      <PropertyTable />
      <div className="mt-[2px] h-[22px] border border-[#a5a59b]" />
    </section>
  )
}

function TitleBar() {
  return (
    <header className="flex h-5 items-center text-white">
      <button type="button" aria-label="Menu fenêtre" className="ml-[5px]">
        <Icon w={10} h={10}>
          <path d="M0 1.500 H10" stroke="#fff" strokeWidth="2" />
          <path d="M1 4.500 H9 L5 8.500 Z" fill="none" stroke="#fff" strokeWidth="1.400" />
        </Icon>
      </button>
      <h1 className="flex-1 pt-px pr-1 text-center text-[16px] leading-5 font-bold [text-shadow:1px_1px_0_#2f5f9f]">
        features.ngc - AXIS 2.8.0-pre1-693-g65603e7 sur LinuxCNC-Sim with LinuxCNC-Features
      </h1>
      <div className="flex items-center gap-2 pr-1">
        <button type="button" aria-label="Réduire"><Icon w={6} h={12}><rect x="1" y="4" width="4" height="4" fill="none" stroke="#fff" strokeWidth="1.500" /></Icon></button>
        <button type="button" aria-label="Agrandir"><Icon w={12} h={12}><rect x="1" y="1" width="10" height="10" fill="none" stroke="#fff" strokeWidth="2" /></Icon></button>
        <button type="button" aria-label="Fermer"><Icon w={12} h={12}><path d="M1 1 L11 11 M11 1 L1 11" stroke="#fff" strokeWidth="2" /></Icon></button>
      </div>
    </header>
  )
}

function StatusCell({ width, children }: { width: string; children: ReactNode }) {
  return (
    <div className={clsx('flex h-[19px] items-center border border-t-2 border-t-[#828282] border-r-white border-b-white border-l-[#828282] pl-px', width)}>
      {children}
    </div>
  )
}

export default function App() {
  return (
    <div className="flex min-h-screen flex-col bg-black px-px pt-px pb-[2px] font-['DejaVu_Sans',sans-serif] text-[12px] leading-[14px] text-[#111]">
      <SharedDefs />
      <div className="flex flex-1 flex-col rounded-t-md rounded-b-sm bg-[#5c96e1] px-1 pb-[3px] shadow-[inset_1px_1px_0_#9cc4f4]">
        <TitleBar />
        <div className="flex flex-1 flex-col border border-[#3a68a8] bg-[#d9d9d9]">
          <div className="flex h-[27px] border border-t-white border-r-[#828282] border-b-[#828282] border-l-white pb-[2px] pl-[6px]">
            <Menu items={['Fichier', 'Machine', 'Vues', 'Aide']} gap="gap-[11px]" />
          </div>
          <main className="flex flex-1">
            <div className="flex min-w-0 flex-1 flex-col">
              <MachineToolbar />
              <div className="flex flex-1 gap-[3px] pr-px pl-[2px]">
                <div className="flex w-[360px] shrink-0 flex-col pt-[2px]">
                  <div className="flex h-[19px] items-end">
                    <Tab active>Contrôle manuel [F3]</Tab>
                    <Tab>Données manuelles [F5]</Tab>
                  </div>
                  <ManualPane />
                  <Overrides />
                </div>
                <div className="flex flex-1 flex-col pt-[2px]">
                  <div className="flex h-[19px] items-end">
                    <Tab active>Parcours d'outil</Tab>
                    <Tab>Visu</Tab>
                  </div>
                  <Preview />
                  <div className="h-[2px]" />
                </div>
              </div>
              <div className="h-[7px] pl-[9px]">
                <div className="size-1 border border-t-white border-r-[#828282] border-b-[#828282] border-l-white" />
              </div>
              <Listing />
              <footer className="flex h-[21px] items-end gap-[2px] pt-px pb-px">
                <StatusCell width="w-[117px]">A/U</StatusCell>
                <StatusCell width="w-[244px]">Pas d'outil</StatusCell>
                <StatusCell width="w-[205px]">Position: Relatif Actuelle</StatusCell>
              </footer>
            </div>
            <FeaturesPanel />
          </main>
        </div>
      </div>
    </div>
  )
}
